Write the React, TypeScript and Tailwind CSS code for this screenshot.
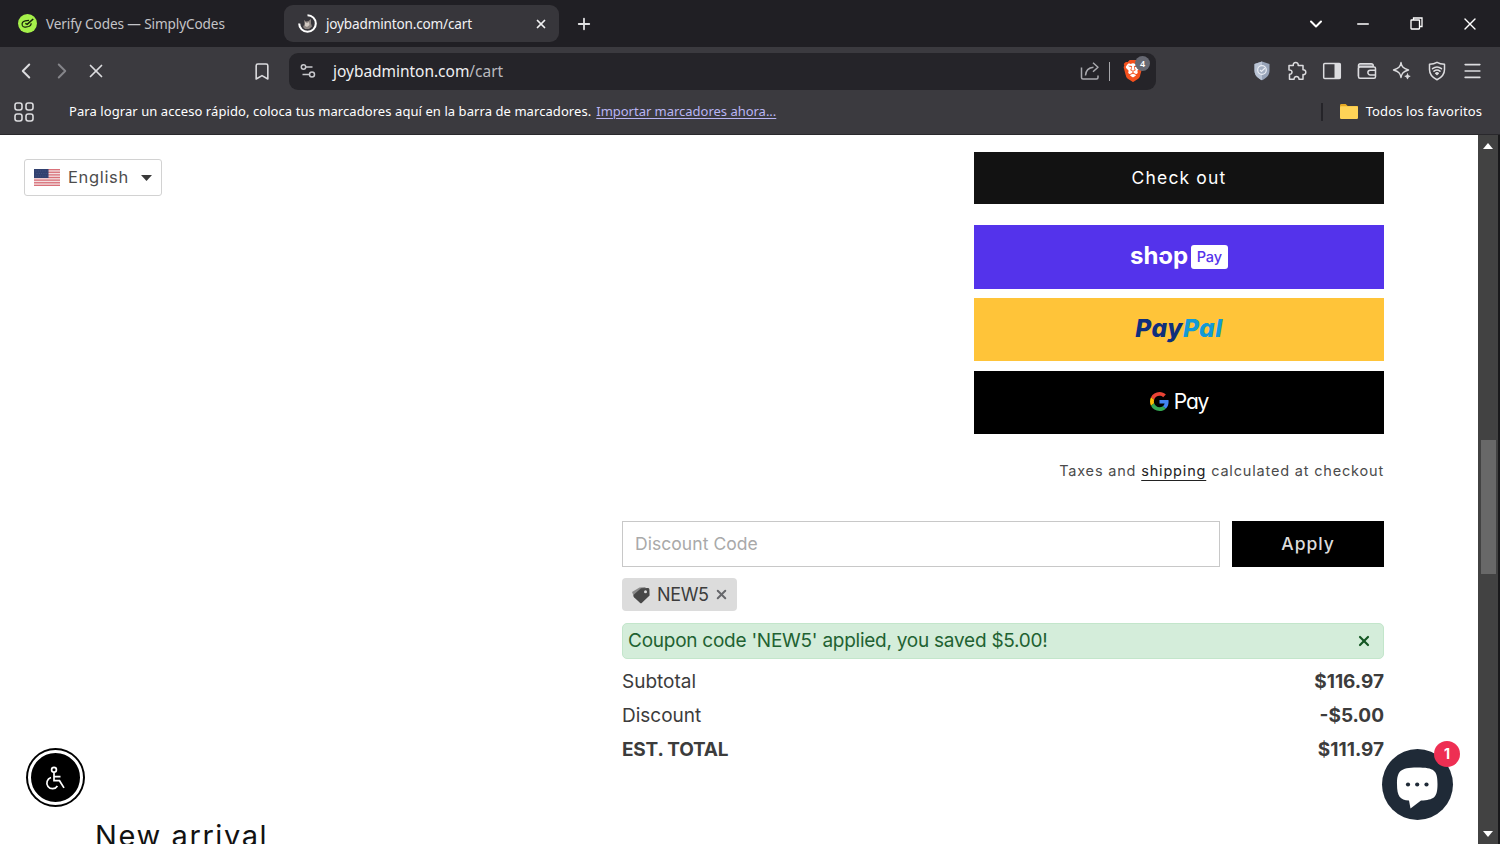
import React from 'react';
import { Bookmark, ChevronDown, ChevronLeft, ChevronRight, Menu, Minus, Plus, X } from 'lucide-react';
import { SiBrave } from 'react-icons/si';

const SUMMARY_ROWS = [
  { label: 'Subtotal', value: '$116.97', bold: false },
  { label: 'Discount', value: '-$5.00', bold: false },
  { label: 'EST. TOTAL', value: '$111.97', bold: true },
];

function TabStrip() {
  return (
    <div className="h-[47px] shrink-0 flex items-center bg-[#201f24] text-[14px]">
      <div className="w-[284px] pl-[18px] flex items-center gap-[9px] text-[#c4c4c8]">
        <svg className="w-[19px] h-[19px] shrink-0" viewBox="0 0 19 19" fill="none">
          <circle cx="9.5" cy="9.5" r="9.5" fill="#a5f04a" />
          <path d="M11 6.3 7.2 6.9C5 7.4 3.8 9.3 4.200 11.200c.4 1.600 1.800 2.200 3.400 1.900l3-.6c1.600-.4 2.600-1.600 2.600-3.200" stroke="#16230c" strokeWidth="1.2" />
          <path d="m7.3 9.4 1.9 1L15.200 5" stroke="#16230c" strokeWidth="1.6" />
        </svg>
        <span className="mt-px whitespace-nowrap text-[13.6px] tracking-[-0.11px]">Verify Codes — SimplyCodes</span>
      </div>
      {/* Active tab */}
      <div className="w-[275px] h-[37px] pl-[14px] pr-[11px] flex items-center rounded-[9px] bg-[#37363b] text-[#f1f1f3]">
        <svg className="w-[19px] h-[19px] shrink-0" viewBox="0 0 19 19" fill="none">
          <path d="m6 6 2 1.500 2.500-.5L13 5v4.500l1 3-3 2.500H7l-2-2 1.500-3z" fill="#8d8581" />
          <path d="m7 8 2 1 2-1 .5 3L9 13l-2-1z" fill="#d2c9c2" />
          <path d="M9.500 1.200a8.300 8.300 0 1 1-8.300 8.300" stroke="#fff" strokeWidth="2.1" />
        </svg>
        <span className="mt-px ml-[9px] flex-1 whitespace-nowrap text-[13.6px] tracking-[-0.18px]">joybadminton.com/cart</span>
        <X className="w-[14px] h-[14px]" strokeWidth={3} />
      </div>
      <Plus className="ml-[16px] w-[18px] h-[18px] text-[#e0e0e2]" strokeWidth={2.4} />
      <div className="ml-auto mr-[20px] flex items-center text-white">
        <ChevronDown className="w-[20px] h-[20px] mr-[28px]" strokeWidth={2.4} />
        <Minus className="w-[18px] h-[18px] mr-[38px]" strokeWidth={2} />
        <svg className="w-[13px] h-[13px] mr-[37px]" viewBox="0 0 13 13" fill="none" stroke="currentColor" strokeWidth="1.3">
          <rect x="1" y="3" width="8.5" height="9" rx="0.5" />
          <path d="M3.500 3V1H12v8.500H9.500" />
        </svg>
        <X className="w-[20px] h-[20px]" strokeWidth={1.6} />
      </div>
    </div>
  );
}

function ExtensionIcons() {
  return (
    <div className="ml-auto mr-[18px] flex items-center gap-[15px] text-[#dcdcdf]">
      <svg className="w-[20px] h-[20px]" viewBox="0 0 20 20" fill="none">
        <path d="M10 .5 17.500 3v6.500c0 5-3.300 7.800-7.500 9.700-4.200-1.900-7.500-4.700-7.500-9.700V3z" fill="#97a3b8" />
        <path d="M10 .5V19.200c-4.200-1.900-7.500-4.700-7.500-9.700V3z" fill="#b9c3d4" />
        <circle cx="10" cy="9" r="4.3" fill="#a3aec1" stroke="#e9edf4" strokeWidth="1.2" />
        <path d="m8 9 1.500 1.500L13 7" stroke="#e9edf4" strokeWidth="1.2" />
      </svg>
      <svg className="w-[20px] h-[20px]" viewBox="0 0 20 20" fill="none" stroke="currentColor" strokeWidth="1.5" strokeLinejoin="round">
        <path d="M2 4.500h4.300C6 2.600 7.100 1.500 8.700 1.500s2.700 1.100 2.500 3H16v4.300c1.700-.2 2.800.8 2.800 2.400s-1.100 2.600-2.800 2.400v4.700h-4c.1-1.800-.9-2.800-2.500-2.800S7 16.500 7.100 18.300H2.500v-5c1.600.1 2.500-.8 2.500-2.200S4.100 8.900 2 9z" />
      </svg>
      <svg className="w-[20px] h-[20px]" viewBox="0 0 20 20" fill="none">
        <rect x="1.7" y="2.5" width="16.6" height="15" rx="1" stroke="currentColor" strokeWidth="1.5" />
        <path d="M12.500 2.500h5.800v15h-5.800z" fill="currentColor" />
      </svg>
      <svg className="w-[20px] h-[20px]" viewBox="0 0 20 20" fill="none" stroke="currentColor" strokeWidth="1.5">
        <path d="M1.500 15V4.500c0-1 .7-1.700 1.700-1.700h11c1.300 0 2 .6 2 1.800V6H1.500" fill="#8b8b90" />
        <rect x="1.5" y="6" width="17" height="11.3" rx="1.5" fill="#3b3a3f" />
        <path d="M18.500 9.300h-5.300a2.300 2.300 0 0 0 0 4.600h5.300" />
      </svg>
      <svg className="w-[20px] h-[20px]" viewBox="0 0 20 20" fill="none" stroke="currentColor" strokeWidth="1.4" strokeLinejoin="round">
        <path d="M9 1.500c.7 4.300 2.200 6 7.500 7.500-5.300 1.500-6.800 3.200-7.500 7.500C8.300 12.200 6.800 10.500 1.500 9 6.800 7.500 8.300 5.800 9 1.500Z" />
        <path d="M15.500 12.500c.3 1.700 1 2.400 2.700 2.800-1.700.4-2.400 1.100-2.700 2.800-.3-1.700-1-2.400-2.700-2.800 1.700-.4 2.400-1.100 2.700-2.800Z" fill="currentColor" strokeWidth=".8" />
      </svg>
      <svg className="w-[20px] h-[20px]" viewBox="0 0 20 20" fill="none" stroke="currentColor" strokeWidth="1.5" strokeLinecap="round" strokeLinejoin="round">
        <path d="M10 1.300c2.200 1.300 4.600 1.900 7.500 2v5.200c0 4.600-2.400 7.800-7.500 10.200-5.100-2.400-7.500-5.600-7.500-10.200V3.300c2.900-.1 5.300-.7 7.500-2Z" />
        <path d="M5.500 7.700c2.700-2 6.300-2 9 0M7 10.200c1.800-1.400 4.200-1.400 6 0" />
        <path d="m8.700 12.300 1.300 1.200 1.300-1.200c-.8-.6-1.800-.6-2.600 0Z" fill="currentColor" />
      </svg>
      <Menu className="w-[23px] h-[22px] -mx-[1.5px]" strokeWidth={1.8} />
    </div>
  );
}

function AddressBar() {
  return (
    <div className="h-[48px] shrink-0 flex items-center bg-[#3b3a3f] text-[#dcdcdf]">
      <ChevronLeft className="ml-[13px] w-[26px] h-[26px]" strokeWidth={1.8} />
      <ChevronRight className="ml-[10px] w-[26px] h-[26px] text-[#85858a]" strokeWidth={1.8} />
      <X className="ml-[10px] w-[22px] h-[22px]" strokeWidth={1.9} />
      <Bookmark className="ml-[145px] w-[20px] h-[21px] shrink-0" strokeWidth={1.9} />
      <div className="ml-[17px] w-[867px] h-[37px] flex items-center rounded-[9px] bg-[#252429]">
        <svg className="ml-[11px] w-[16px] h-[16px]" viewBox="0 0 16 16" fill="none" stroke="#c8c8cc" strokeWidth="1.5">
          <circle cx="3.500" cy="4" r="2.2" />
          <path d="M6 4h6.500M2.500 11.500h7" />
          <circle cx="12" cy="11.5" r="2.5" />
        </svg>
        <span className="mt-px ml-[17px] flex-1 text-[15.5px] tracking-[-0.03px]">
          <span className="text-[#f0f0f2]">joybadminton.com</span><span className="text-[#b9b9be]">/cart</span>
        </span>
        <svg className="w-[20px] h-[20px]" viewBox="0 0 20 20" fill="none" stroke="#a9a9ae" strokeWidth="1.5" strokeLinejoin="round">
          <path d="M1.500 6.500v10c0 1 .5 1.500 1.500 1.500h13.500c1 0 1.500-.5 1.500-1.500v-2" />
          <path d="M5.500 14.500c.3-4.800 3-7.800 8-8.200M13 1.800l5 4.500-5 4.500" />
        </svg>
        <span className="ml-[9px] w-px h-[19px] bg-[#a6a6aa]" />
        <div className="relative ml-[13px] mr-[13px]">
          <svg className="w-[20px] h-[22px]" viewBox="0 0 20 22">
            <path d="M6 1.500h8L18 5l-1.600 10.500L10 21l-6.400-5.500L2 5z" fill="#fff" />
          </svg>
          <SiBrave className="absolute left-[-1px] top-0 w-[22px] h-[22px] text-[#f4511e]" />
          <span className="absolute left-[12px] -top-[4px] w-[15px] h-[15px] rounded-full bg-[#666872] text-white text-[9px] leading-[15px] font-semibold text-center">4</span>
        </div>
      </div>
      <ExtensionIcons />
    </div>
  );
}

function BookmarksBar() {
  return (
    <div className="h-[40px] shrink-0 pb-[6px] flex items-center bg-[#3b3a3f] text-white text-[13px] border-b border-[#29282c]">
      <svg className="ml-[14px] w-[20px] h-[20px]" viewBox="0 0 20 20" fill="none" stroke="#dcdcdf" strokeWidth="1.6">
        <rect x="1" y="1" width="7" height="7" rx="2.2" />
        <rect x="12" y="1" width="7" height="7" rx="2.2" />
        <rect x="1" y="12" width="7" height="7" rx="2.2" />
        <rect x="12" y="12" width="7" height="7" rx="2.2" />
      </svg>
      <span className="ml-[35px] whitespace-nowrap tracking-[0.07px]">
        Para lograr un acceso rápido, coloca tus marcadores aquí en la barra de marcadores.
      </span>
      <a className="ml-[5px] whitespace-nowrap text-[#b9b5f4] underline underline-offset-2 tracking-[-0.02px]">Importar marcadores ahora...</a>
      <span className="ml-auto w-[2px] h-[18px] bg-[#252429]" />
      <svg className="ml-[17px] w-[18px] h-[15px]" viewBox="0 0 18 15">
        <path d="M0 1.500C0 .5.500 0 1.500 0h4.200l2 2H17c.7 0 1 .4 1 1v2H0z" fill="#e5a823" />
        <rect y="2.2" width="18" height="12.8" rx="1.2" fill="#ffd457" />
      </svg>
      <span className="ml-[8px] mr-[18px] whitespace-nowrap tracking-[0.11px]">Todos los favoritos</span>
    </div>
  );
}

function UsFlag() {
  return (
    <svg className="w-[26px] h-[17px]" viewBox="0 0 26 17">
      <rect width="26" height="17" fill="#f3dfe0" />
      {[0, 1, 2, 3, 4, 5, 6].map((i) => (
        <rect key={i} y={i * 2.62} width="26" height="1.3" fill="#d9717a" />
      ))}
      <rect width="14.5" height="9" fill="#31416f" />
      <path d="M1.500 2h12M2.500 4.500h11M1.500 7h12" stroke="#4b5b88" strokeWidth=".8" strokeDasharray="1 1.3" />
    </svg>
  );
}

function PaymentButtons() {
  return (
    <div className="w-[410px] ml-auto flex flex-col">
      <button className="h-[52px] bg-[#121212] text-white text-[17.5px] tracking-[1.15px]">Check out</button>
      <button className="mt-[21px] h-[64px] flex items-center justify-center gap-[3px] bg-[#5433eb] text-white">
        <span className="relative text-[24px] leading-[24px] font-bold tracking-[-0.1px] -mt-[2px]">
          shop
          {/* opening in the ring of the "o" */}
          <span className="absolute left-[28px] top-[11px] w-[5px] h-[2px] bg-[#5433eb]" />
        </span>
        <span className="w-[37px] h-[24px] rounded-[3px] bg-white text-[#5433eb] text-[14.5px] leading-[23px] font-medium">Pay</span>
      </button>
      <button className="mt-[9px] h-[63px] pb-[2px] flex items-center justify-center bg-[#ffc439] text-[24.5px] tracking-[0.5px] font-extrabold italic [font-feature-settings:'cv11']">
        <span className="text-[#0f2f7c]">Pay</span>
        <span className="text-[#139ad6]">Pal</span>
      </button>
      <button className="mt-[10px] h-[63px] pb-[2px] flex items-center justify-center gap-[5px] bg-black text-white">
        <svg className="w-[19px] h-[19px]" viewBox="0 0 48 48">
          <path fill="#ea4335" d="M24 9.500c3.540 0 6.710 1.220 9.210 3.600l6.850-6.850C35.900 2.380 30.470 0 24 0 14.620 0 6.510 5.380 2.560 13.220l7.980 6.190C12.430 13.720 17.740 9.500 24 9.500z" />
          <path fill="#4285f4" d="M46.980 24.550c0-1.570-.15-3.090-.38-4.550H24v9.020h12.940c-.58 2.960-2.260 5.480-4.780 7.180l7.730 6c4.510-4.180 7.090-10.360 7.090-17.650z" />
          <path fill="#fbbc05" d="M10.530 28.590c-.48-1.450-.76-2.990-.76-4.590s.27-3.140.76-4.590l-7.980-6.190C.92 16.460 0 20.120 0 24s.92 7.540 2.560 10.780l7.970-6.190z" />
          <path fill="#34a853" d="M24 48c6.480 0 11.930-2.130 15.890-5.810l-7.730-6c-2.150 1.450-4.920 2.300-8.160 2.300-6.260 0-11.570-4.220-13.470-9.910l-7.980 6.190C6.510 42.620 14.620 48 24 48z" />
        </svg>
        <span className="text-[21px] leading-[24px] tracking-[-1.2px] [font-feature-settings:'cv11']">Pay</span>
      </button>
      <p className="mt-[25px] h-[24px] text-right whitespace-nowrap leading-[24px] text-[14.5px] tracking-[0.82px] text-[#4b4b4b]">
        Taxes and <a className="text-[#222] underline underline-offset-4 decoration-1">shipping</a> calculated at checkout
      </p>
    </div>
  );
}

function DiscountPanel() {
  return (
    <div className="mt-[38px] flex flex-col">
      <div className="flex gap-[12px]">
        <input
          className="w-[598px] h-[46px] px-[12px] pb-[2px] border border-[#c8c8c8] bg-white text-[17.5px] tracking-[0.05px] placeholder:text-[#a9a9a9]"
          placeholder="Discount Code"
        />
        <button className="flex-1 h-[46px] bg-black text-[#dcdcdc] text-[17.5px] font-medium tracking-[0.95px]">Apply</button>
      </div>
      <div className="mt-[11px] w-[115px] h-[33px] pl-[10px] flex items-center rounded-[4px] bg-[#dcdcdc] text-[#3c3c3c]">
        <svg className="w-[18px] h-[18px]" viewBox="0 0 18 18">
          <path d="m0 6 7.500-4.500L14 1 2.500 12z" fill="#8b8b8b" />
          <path d="m2 8.500 7-6.300 6.800-.2c1 0 1.500.5 1.600 1.500l.2 6-7.600 7.300c-.7.700-1.400.7-2.100 0L2 11.200c-.8-1-.8-1.800 0-2.700Z" fill="#484848" />
          <circle cx="13.500" cy="5.800" r="1.5" fill="#dcdcdc" />
        </svg>
        <span className="ml-[7px] text-[18px] tracking-[-0.35px]">NEW5</span>
        <X className="ml-[5px] w-[15px] h-[15px] text-[#66676b]" strokeWidth={3.2} />
      </div>
      <div className="mt-[12px] h-[36px] pl-[5px] pr-[11px] flex items-center justify-between rounded-[5px] border border-[#c3e6cb] bg-[#d4edda] text-[#1f6232] text-[19px]">
        <span className="mt-px tracking-[-0.25px]">Coupon code 'NEW5' applied, you saved $5.00!</span>
        <X className="w-[16px] h-[16px] text-[#155724]" strokeWidth={3.2} />
      </div>
      <div className="mt-[6.5px] flex flex-col text-[19px] text-[#3c3c3c]">
        {SUMMARY_ROWS.map((row) => (
          <div key={row.label} className="h-[34px] flex items-center justify-between">
            <span className={row.bold ? 'font-bold tracking-[-0.2px]' : ''}>{row.label}</span>
            <span className="font-bold">{row.value}</span>
          </div>
        ))}
      </div>
    </div>
  );
}

function ChatButton() {
  return (
    <div className="absolute left-[1382px] top-[614px] w-[71px] h-[71px] rounded-full bg-[#1f2a37]">
      <svg className="w-[71px] h-[71px]" viewBox="0 0 71 71">
        <path d="M35 18.500c17.500 0 20.500 3 20.500 16.500S52 51 39 51.500L28.500 59.500 27 51.500C18 51 15 47.500 15 35s3-16.500 20-16.500Z" fill="#fff" />
        <circle cx="26" cy="35.5" r="2.1" fill="#1f2a37" />
        <circle cx="35.2" cy="35.5" r="2.1" fill="#1f2a37" />
        <circle cx="44.5" cy="35.5" r="2.1" fill="#1f2a37" />
      </svg>
      <span className="absolute left-[52px] -top-[8px] w-[26px] h-[26px] rounded-full bg-[#ee2f53] text-white text-[14px] leading-[26px] font-bold text-center">1</span>
    </div>
  );
}

function AccessibilityButton() {
  return (
    <div className="absolute left-[26px] top-[613px] w-[59px] h-[59px] rounded-full bg-black p-[2px]">
      <div className="w-full h-full rounded-full border-[3px] border-white bg-black flex items-center justify-center">
        <svg className="mr-[2px] w-[22px] h-[24px]" viewBox="0 0 22 24" fill="none" stroke="#fff" strokeWidth="1.7">
          <circle cx="10" cy="3.8" r="2.4" />
          <path d="M10 6.200v8.500h5.500l4.500 7.200M10 10.700h6.500" />
          <path d="M7 11.500a5.700 5.700 0 1 0 6.400 8.500" />
        </svg>
      </div>
    </div>
  );
}

function Scrollbar() {
  return (
    <div className="w-[22px] shrink-0 flex border-r-2 border-[#19191b] bg-[#424242]">
      <div className="w-[20px] flex flex-col items-center">
        <svg className="mt-[8px] w-[10px] h-[6px]" viewBox="0 0 10 6"><path d="M5 0l5 6H0z" fill="#fff" /></svg>
        <div className="mt-[291px] w-[15px] h-[134px] bg-[#686868]" />
        <svg className="mt-auto mb-[7px] w-[10px] h-[6px]" viewBox="0 0 10 6"><path d="M0 0h10L5 6z" fill="#fff" /></svg>
      </div>
    </div>
  );
}

export default function App() {
  return (
    <div className="w-[1500px] h-[844px] flex flex-col overflow-hidden bg-white font-['Noto_Sans',sans-serif]">
      <TabStrip />
      <AddressBar />
      <BookmarksBar />
      <div className="flex-1 min-h-0 flex">
        <main className="relative w-[1478px] h-full overflow-hidden bg-white font-['Inter',sans-serif]">
          <div className="ml-[622px] w-[762px] pt-[17px]">
            <PaymentButtons />
            <DiscountPanel />
          </div>
          <h2 className="ml-[95px] mt-[49px] text-[29px] leading-[38px] tracking-[1.6px] text-[#121212]">New arrival</h2>

          {/* Widgets floating over the cart */}
          <div className="absolute left-[24px] top-[24px] w-[138px] h-[37px] pl-[9px] flex items-center rounded-[3px] border border-[#d2d2d2] bg-white text-[#4d4d4d]">
            <UsFlag />
            <span className="ml-[8px] text-[16.5px] tracking-[0.65px]">English</span>
            <svg className="ml-[12px] w-[11px] h-[6px]" viewBox="0 0 11 6"><path d="M0 0h11L5.500 6z" fill="#3a3a3a" /></svg>
          </div>
          <AccessibilityButton />
          <ChatButton />
        </main>
        <Scrollbar />
      </div>
    </div>
  );
}
